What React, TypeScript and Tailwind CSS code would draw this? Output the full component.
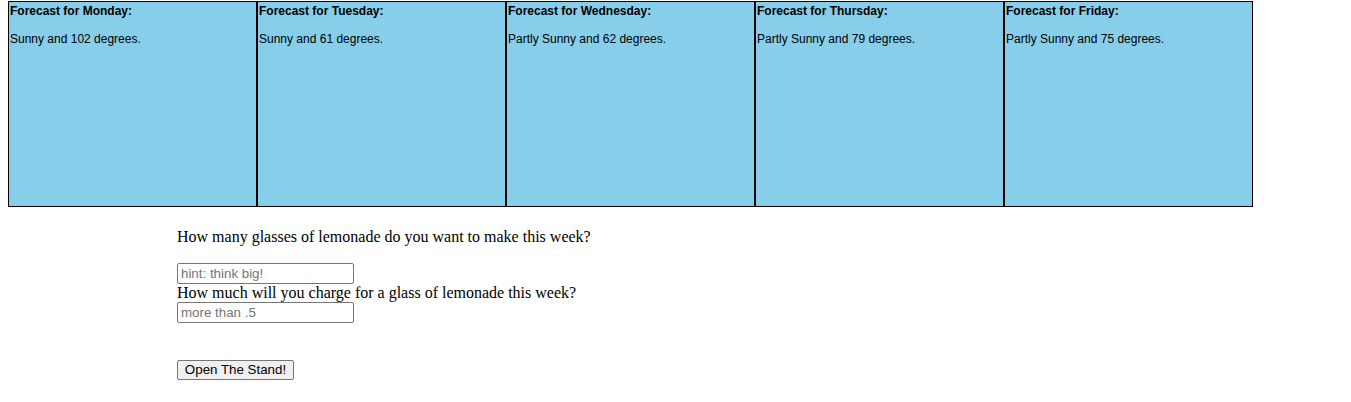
import React from 'react';

const forecasts = [
  { day: 'Monday', text: 'Sunny and 102 degrees.' },
  { day: 'Tuesday', text: 'Sunny and 61 degrees.' },
  { day: 'Wednesday', text: 'Partly Sunny and 62 degrees.' },
  { day: 'Thursday', text: 'Partly Sunny and 79 degrees.' },
  { day: 'Friday', text: 'Partly Sunny and 75 degrees.' },
];

const ForecastBox = ({ day, text }: { day: string; text: string }) => (
  <div className="w-[249px] h-[206px] border border-black bg-[#87ceeb] pt-[2px] pl-[1px] font-['Liberation_Sans',Arial,sans-serif] text-[12px] leading-[14px] text-black">
    <div className="font-bold">Forecast for {day}:</div>
    <p className="mt-[14px]">{text}</p>
  </div>
);

const App = () => {
  return (
    <div className="min-h-[402px] bg-white pt-[1px] px-[8px]">
      <div className="flex">
        {forecasts.map((f) => (
          <ForecastBox key={f.day} day={f.day} text={f.text} />
        ))}
      </div>

      <div className="pl-[169px] font-['Liberation_Serif','Times_New_Roman',serif] text-[16px] leading-[18px] text-black">
        <p className="mt-[21px] mb-[17px]">How many glasses of lemonade do you want to make this week?</p>
        <input
          type="text"
          placeholder="hint: think big!"
          className="block w-[177px] h-[21px] border border-[#767676] rounded-[2px] px-[3px] font-['Liberation_Sans',Arial,sans-serif] text-[13.33px] placeholder:text-[#757575]"
        />
        <div>How much will you charge for a glass of lemonade this week?</div>
        <input
          type="text"
          placeholder="more than .5"
          className="block w-[177px] h-[21px] border border-[#767676] rounded-[2px] px-[3px] font-['Liberation_Sans',Arial,sans-serif] text-[13.33px] placeholder:text-[#757575]"
        />
        <div className="pt-[37px]">
          <button className="h-[20px] w-[117px] border border-[#767676] rounded-[2px] bg-[#efefef] font-['Liberation_Sans',Arial,sans-serif] text-[13.33px] leading-[16px] text-black">
            Open The Stand!
          </button>
        </div>
      </div>
    </div>
  );
};

export default App;
